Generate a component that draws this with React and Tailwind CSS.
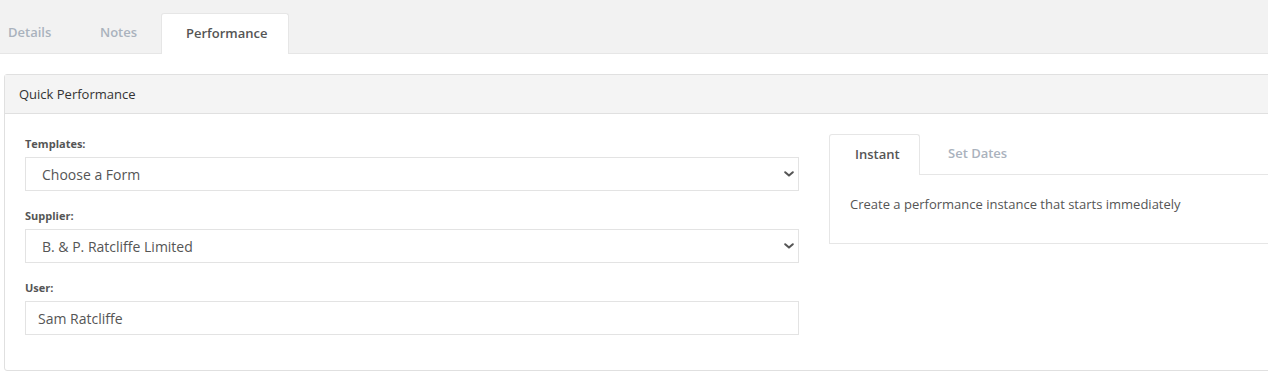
import React from "react";

function Chevron() {
  return (
    <svg width="10" height="6" viewBox="0 0 10 6" className="shrink-0">
      <path d="M1.2 1.2 L5 4.6 L8.8 1.2" fill="none" stroke="#555" strokeWidth="2" strokeLinecap="round" strokeLinejoin="round" />
    </svg>
  );
}

function Field({ label, value, select, pl }) {
  return (
    <div className="mb-[17px]">
      <div className="text-[11px] leading-[15px] font-bold text-[#555] mb-[6px]">{label}</div>
      <div className={`h-[34px] border border-[#e3e3e3] bg-white flex items-center justify-between pr-[4px] ${pl}`}>
        <span className="text-[14px] text-[#555]">{value}</span>
        {select && <Chevron />}
      </div>
    </div>
  );
}

export default function App() {
  return (
    <div className="w-[1268px] h-[377px] overflow-hidden bg-white" style={{ fontFamily: '"Open Sans", sans-serif' }}>
      {/* top tabs */}
      <div className="bg-[#f2f2f2] border-b border-[#e6e6e6] pt-[13px] flex items-end">
        <div className="h-[40px] w-[75px] pl-[8px] flex items-center text-[13px] font-semibold text-[#aab2bd]">Details</div>
        <div className="h-[40px] w-[86px] pl-[25px] flex items-center text-[13px] font-semibold text-[#aab2bd]">Notes</div>
        <div className="h-[41px] -mb-px w-[128px] pl-[24px] flex items-center bg-white border border-b-0 border-[#e6e6e6] rounded-t-[3px] text-[13px] font-semibold text-[#555]">
          Performance
        </div>
      </div>

      {/* panel */}
      <div className="mt-[20px] ml-[4px] w-[1640px] border border-[#e0e0e0] rounded-[3px]">
        <div className="h-[39px] bg-[#f4f4f4] border-b border-[#e0e0e0] pl-[14px] pt-[2px] flex items-center text-[13px] text-[#333]">
          Quick Performance
        </div>
        <div className="pt-[20px] pb-[18px] pl-[20px] flex gap-[30px]">
          <div className="w-[774px] pt-[2px]">
            <Field label="Templates:" value="Choose a Form" select pl="pl-[16px]" />
            <Field label="Supplier:" value="B. & P. Ratcliffe Limited" select pl="pl-[16px]" />
            <Field label="User:" value="Sam Ratcliffe" pl="pl-[12px]" />
          </div>
          <div className="flex-1">
            <div className="flex items-end border-b border-[#e6e6e6]">
              <div className="h-[41px] -mb-px w-[91px] pl-[25px] flex items-center bg-white border border-b-0 border-[#e6e6e6] rounded-t-[3px] text-[13px] font-semibold text-[#555]">
                Instant
              </div>
              <div className="h-[40px] pl-[28px] flex items-center text-[13px] font-semibold text-[#aab2bd]">Set Dates</div>
            </div>
            <div className="h-[69px] border-l border-b border-[#e6e6e6] pt-[20px] pl-[20px] text-[13px] leading-[18px] text-[#555]">
              Create a performance instance that starts immediately
            </div>
          </div>
        </div>
      </div>
    </div>
  );
}
